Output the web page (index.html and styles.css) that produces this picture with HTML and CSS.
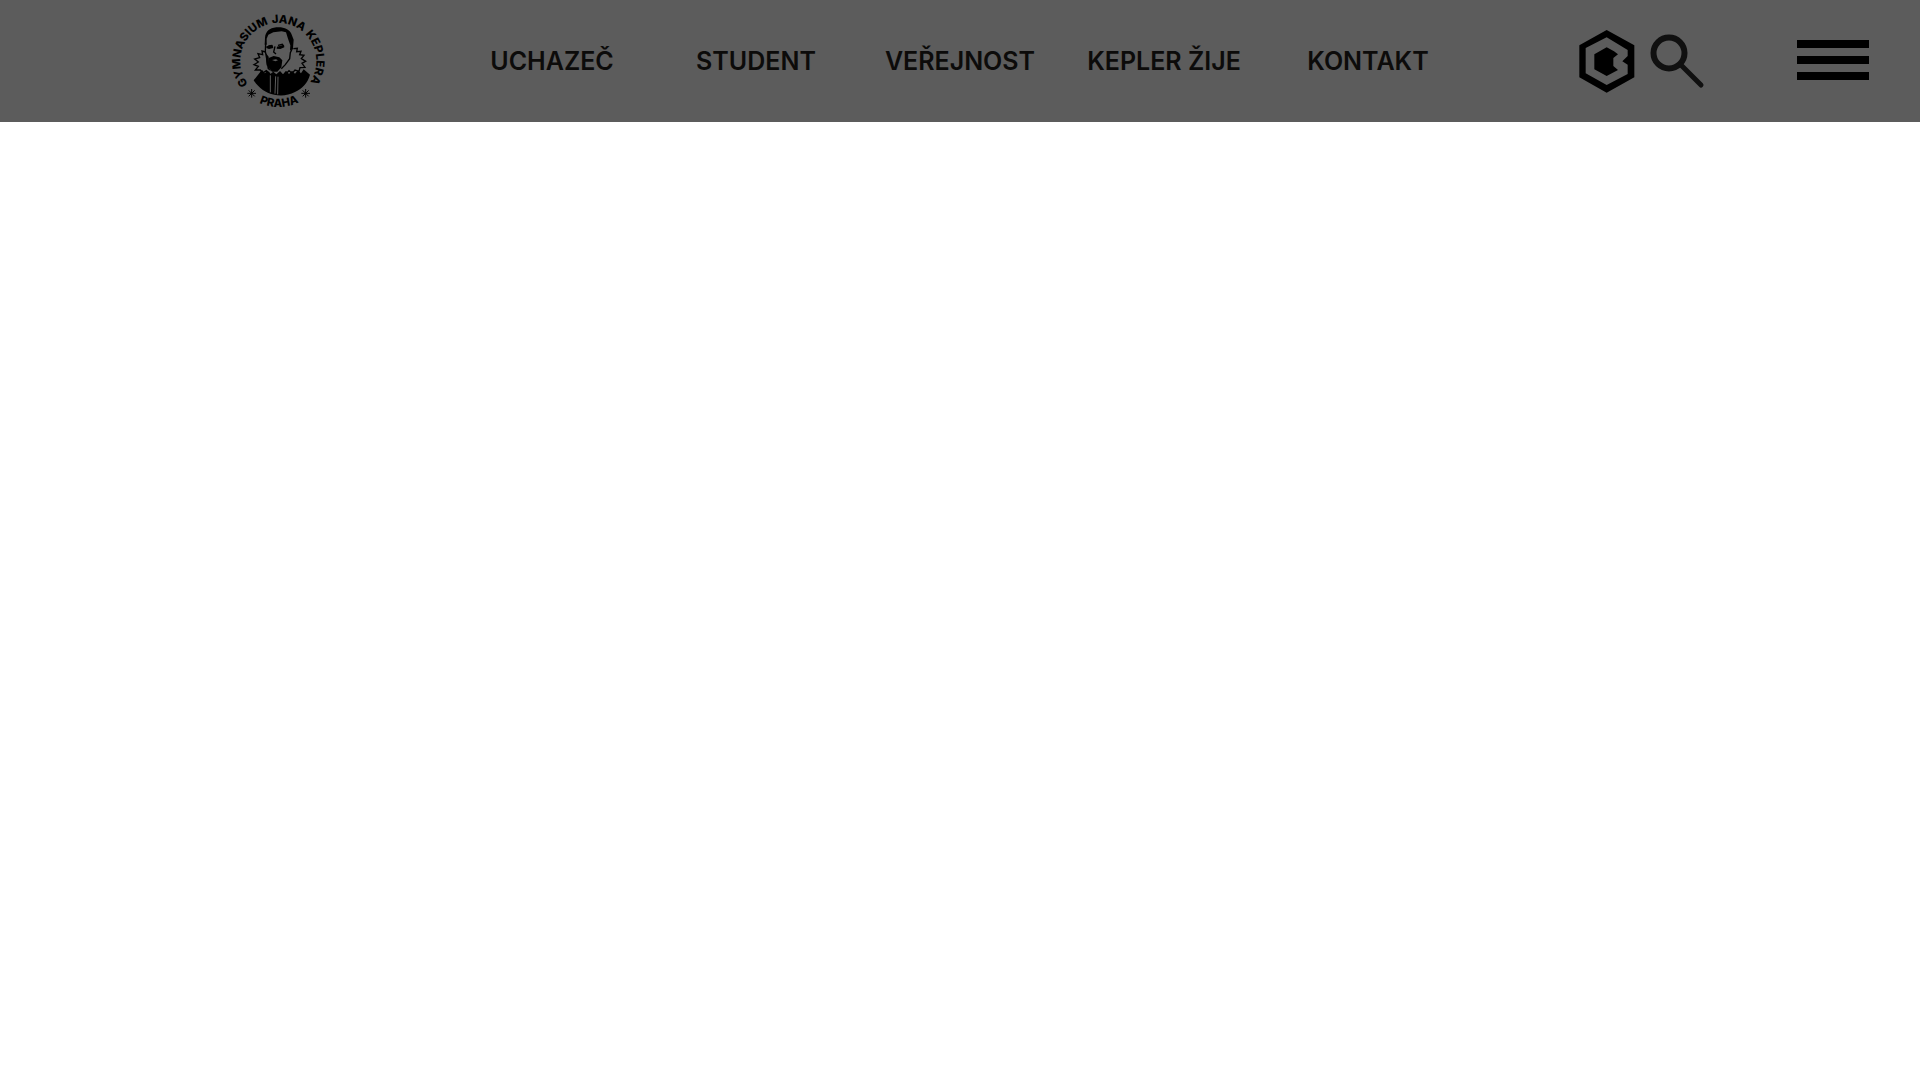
FILE: index.html
```
<!DOCTYPE html>
<html lang="cs">
<head>
<meta charset="utf-8">
<meta name="viewport" content="width=device-width, initial-scale=1">
<title>Gymnasium Jana Keplera</title>
<link rel="stylesheet" href="styles.css">
</head>
<body>
<header class="header">
  <a class="logo" href="#">
    <svg class="logo-image" viewBox="0 0 360 366" role="img" aria-label="Gymnasium Jana Keplera Praha">
      <defs>
        <path id="ring" d="M175 297A114 114 0 0 1 175 69A114 114 0 0 1 175 297"/>
        <path id="ring-bottom" d="M37 183A138 138 0 0 0 313 183"/>
      </defs>
      <g class="logo-text">
        <text><textPath href="#ring" startOffset="30.2%">GYMNASIUM</textPath></text>
        <text><textPath href="#ring" startOffset="54.2%">JANA</textPath></text>
        <text><textPath href="#ring" startOffset="73.4%">KEPLERA</textPath></text>
        <text><textPath href="#ring-bottom" startOffset="50.5%">PRAHA</textPath></text>
      </g>
      <g class="logo-line">
        <path class="logo-star" d="M95 267V293M82 280H108M86 271L104 289M104 271L86 289"/>
        <path class="logo-star" d="M257 267V293M244 280H270M248 271L266 289M266 271L248 289"/>
        <path d="M137 156L126 153L128 164L114 161L119 173L104 177L115 186L102 194L115 199L106 210L121 210L128 219L139 212L150 221"/>
        <path d="M220 146L232 145L230 155L243 154L239 164L252 166L244 176L257 184L246 190L255 202L240 203L237 214L225 210L216 220L207 212L198 221"/>
        <path d="M137 128L136 154L140 176L142 196M218 143L211 158L209 176L196 194L184 206"/>
        <path d="M165 139L161 156L168 162M174 136L187 133L192 140M145 138L157 136"/>
      </g>
      <path d="M134 134L135 113C137 94 148 84 169 82C191 80 208 88 214 101L221 119L219 144L210 152L211 136L204 116L198 97L185 94L160 97L145 104L140 116L140 134Z"/>
      <path d="M139 139L158 136L160 144L147 147L139 144ZM171 140L190 135L193 142L181 147L170 146Z"/>
      <path fill-rule="evenodd" d="M146 174L161 168L178 172L187 181L184 202L172 215L156 215L145 202ZM156 180L168 178L174 181L166 184Z"/>
      <path d="M138 160L146 170L148 205L153 214L143 207L139 184Z"/>
      <path d="M101 241L126 209L134 220L143 213L151 222L160 215L169 223L180 213L189 223L198 212L207 222L216 212L225 221L234 211L243 220L251 208L270 224C263 250 245 267 225 276C206 286 183 289 163 284C137 280 116 264 101 241Z"/>
      <path class="logo-detail" d="M151 226V277M167 229L165 281M174 230L173 283"/>
    </svg>
  </a>
  <nav class="nav">
    <a href="#">UCHAZEČ</a>
    <a href="#">STUDENT</a>
    <a href="#">VEŘEJNOST</a>
    <a href="#">KEPLER ŽIJE</a>
    <a href="#">KONTAKT</a>
  </nav>
  <div class="tools">
    <a class="portal" href="#" aria-label="Bakaláři">
      <svg viewBox="57 60 168 189" width="56" height="63">
        <path fill-rule="evenodd" d="M140 60L223 106V202L140 248L58 202V106ZM140 82L77 114V190L140 225L203 192V164L187 154L203 138V120Z"/>
        <path d="M140 112L162 124L174 133L160 144V168L174 180L140 198L103 178V133Z"/>
      </svg>
    </a>
    <button class="search" type="button" aria-label="Hledat">
      <svg viewBox="0 0 56 56" width="56" height="56">
        <circle cx="19" cy="20" r="15.5" fill="none" stroke="#101010" stroke-width="6"/>
        <path d="M31 32L51 52" fill="none" stroke="#101010" stroke-width="5" stroke-linecap="round"/>
      </svg>
    </button>
    <button class="menu" type="button" aria-label="Menu"><span></span><span></span><span></span></button>
  </div>
</header>
<main></main>
</body>
</html>
```
FILE: styles.css
```
body {
  margin: 0;
  background: #fff;
  font-family: Inter, "Liberation Sans", sans-serif;
}

.header {
  display: grid;
  grid-template-columns: 450fr 1020fr 450fr;
  align-items: center;
  background: #5c5c5c;
}

.logo {
  display: flex;
  justify-content: flex-end;
  padding-right: 110px;
  color: #000;
}

.logo-image {
  width: 120px;
  height: 122px;
}

.logo-text {
  font-size: 34px;
  font-weight: 800;
  text-anchor: middle;
}

.logo-line {
  fill: none;
  stroke: #000;
  stroke-width: 4;
}

.logo-star {
  stroke-width: 3;
}

.logo-detail {
  fill: none;
  stroke: #5c5c5c;
  stroke-width: 3;
}

.nav {
  display: grid;
  grid-template-columns: repeat(5, 1fr);
}

.nav a {
  color: #0c0b0a;
  font-size: 25px;
  font-weight: 600;
  line-height: 32px;
  text-align: center;
  text-decoration: none;
  white-space: nowrap;
}

.tools {
  display: flex;
  align-items: center;
  justify-content: flex-end;
  padding-right: 51px;
}

.tools svg {
  display: block;
}

.tools button {
  padding: 0;
  border: 0;
  background: none;
  cursor: pointer;
}

.search {
  margin: 0 91px 0 15px;
}

.tools .menu {
  display: grid;
  gap: 8px;
  width: 72px;
  padding-bottom: 2px;
}

.menu span {
  height: 8px;
  background: #000;
}
```
